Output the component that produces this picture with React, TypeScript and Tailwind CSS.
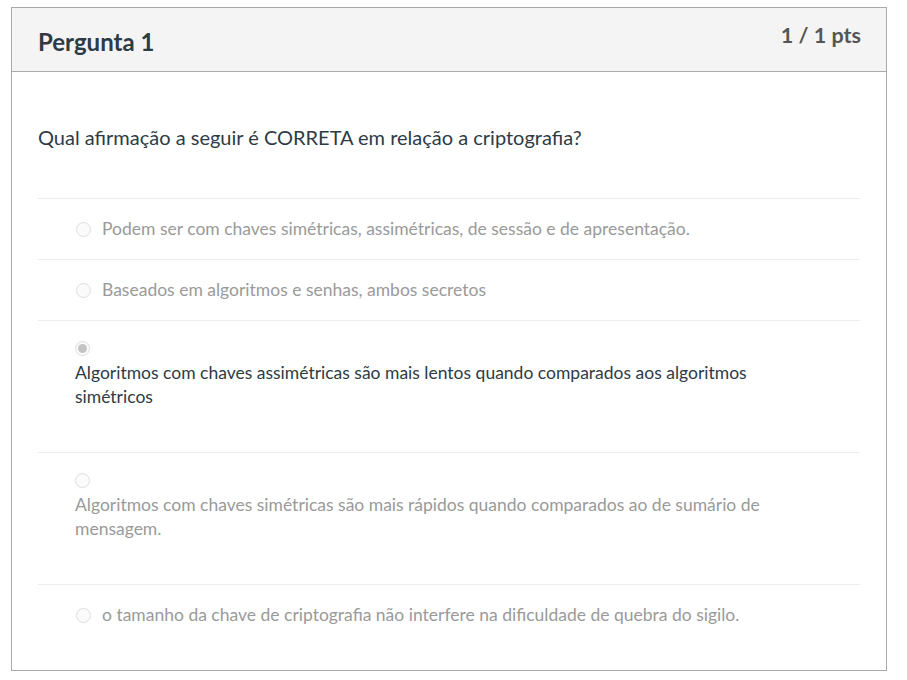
import React from 'react';

type Answer = { id: number; text: string; selected?: boolean; wrap?: boolean };

const answers: Answer[] = [
  { id: 1, text: 'Podem ser com chaves simétricas, assimétricas, de sessão e de apresentação.' },
  { id: 2, text: 'Baseados em algoritmos e senhas, ambos secretos' },
  {
    id: 3,
    text: 'Algoritmos com chaves assimétricas são mais lentos quando comparados aos algoritmos simétricos',
    selected: true,
    wrap: true,
  },
  {
    id: 4,
    text: 'Algoritmos com chaves simétricas são mais rápidos quando comparados ao de sumário de mensagem.',
    wrap: true,
  },
  { id: 5, text: 'o tamanho da chave de criptografia não interfere na dificuldade de quebra do sigilo.' },
];

// Disabled radio as Canvas renders it after submission
const Radio = ({ checked }: { checked?: boolean }) => (
  <span className="flex h-[15px] w-[15px] shrink-0 items-center justify-center rounded-full border border-[#dddddd] bg-[#fbfbfb]">
    {checked && <span className="h-[9px] w-[9px] rounded-full bg-[#c4c4c4]" />}
  </span>
);

export default function App() {
  return (
    <div className="min-h-[680px] bg-white pl-[11px] pt-[7px] font-['Lato','Open_Sans',sans-serif]">
      <div className="h-[664px] w-[876px] border border-[#aaaaaa]">
        <div className="flex h-[64px] items-start justify-between border-b border-[#aaaaaa] bg-[#f4f4f4] pl-[26px] pr-[25px]">
          <h2 className="mt-[19px] text-[24px] font-bold leading-[30px] text-[#2d3b45]">Pergunta 1</h2>
          <span className="mt-[14px] text-[21.5px] font-bold leading-[26px] text-[#555555]">1 / 1 pts</span>
        </div>

        <div className="px-[26px] pt-[51px]">
          <p className="text-[20px] leading-[28px] text-[#2d3b45]">
            Qual afirmação a seguir é CORRETA em relação a criptografia?
          </p>

          <div className="mt-[47px]">
            {answers.map((a) =>
              a.wrap ? (
                <div key={a.id} className="h-[132px] border-t border-[#ececec] pl-[37px] pt-[20px]">
                  <Radio checked={a.selected} />
                  <p
                    className={`mt-[5px] max-w-[700px] text-[17.5px] leading-[24px] ${
                      a.selected ? 'text-[#2d3b45]' : 'text-[#9a9a9a]'
                    }`}
                  >
                    {a.text}
                  </p>
                </div>
              ) : (
                <div
                  key={a.id}
                  className="flex h-[61px] items-center gap-[11px] border-t border-[#ececec] pl-[38px]"
                >
                  <Radio checked={a.selected} />
                  <span className="text-[17.5px] leading-[24px] text-[#9a9a9a]">{a.text}</span>
                </div>
              ),
            )}
          </div>
        </div>
      </div>
    </div>
  );
}
